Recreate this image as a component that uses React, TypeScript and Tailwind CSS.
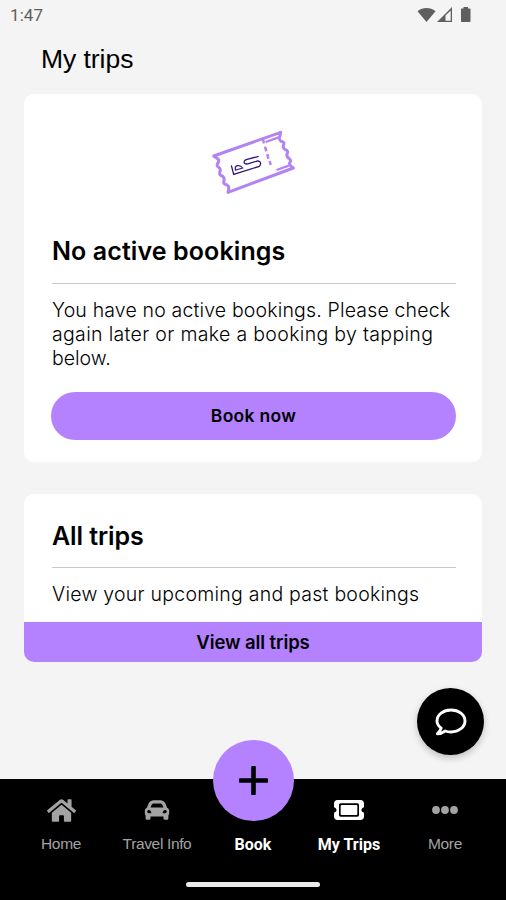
import React from "react";
import { FaHome, FaCarAlt } from "react-icons/fa";
import { FaTicket } from "react-icons/fa6";

type NavItemProps = {
  label: string;
  active?: boolean;
  children?: React.ReactNode;
};

const StatusBar: React.FC = () => {
  return (
    <div className="flex h-[30px] items-center justify-between pl-[10px] pr-[33px] text-[#5f5f5f]">
      <span className="font-[Roboto] text-[17px] leading-[30px] tracking-[0.1px]">
        1:47
      </span>
      <svg width="56" height="18" viewBox="0 0 56 18" fill="currentColor">
        <path d="M0.5 5.2C5.8 0.8 13.2 0.8 18.5 5.2L9.5 16z" />
        {/* Signal, half filled */}
        <path
          fillRule="evenodd"
          d="M35 1V16H20zM33.7 4.4L28.5 9.6V14.7H33.7z"
        />
        <path d="M44.5 2.5H46.5V1h4.5v1.5h1.8q.7 0 .7.8V15.2q0 .8-.8.8h-7.9q-.8 0-.8-.8V3.3q0-.8.5-.8z" />
      </svg>
    </div>
  );
};

const TicketArt: React.FC = () => {
  return (
    <svg width="110" height="85" viewBox="0 0 330 255" fill="none">
      <g stroke="#b283f2" strokeWidth="9" strokeLinejoin="round">
        <path d="M53 116L41 108L242 37L240 48Q234 57 243 64Q256 66 250 76Q248 84 256 89Q267 93 261 102Q259 111 268 116Q275 121 268 130Q268 137 280 144L84 217L86 208Q88 199 80 194Q68 192 72 182Q74 173 67 168Q56 165 60 155Q63 147 56 142Q48 137 54 129Q59 121 53 116" />
        <path
          d="M189 58L192 70M195 80L199 94M202 102L205 116M209 123L212 135"
          strokeWidth="7.5"
        />
        <path d="M197 66L236 52M230 150L266 137" strokeWidth="7" />
      </g>
      <path
        d="M94 136L101 163L178 139Q186 130 178 124Q174 122 168 124L141 132Q130 132 133 123Q135 120 141 118L176 109M107 152Q103 139 112 137Q122 135 128 144L108 150"
        stroke="#30147c"
        strokeWidth="3.8"
      />
    </svg>
  );
};

const NavItem: React.FC<NavItemProps> = ({ label, active, children }) => {
  return (
    <div
      className={
        active
          ? "flex w-24 flex-col items-center font-[Roboto] font-bold text-white"
          : "flex w-24 flex-col items-center text-[#a3a3a3]"
      }
    >
      <div className="flex h-[62px] items-center justify-center">{children}</div>
      <span
        className={
          active
            ? "whitespace-nowrap text-[16px] leading-[8px]"
            : "whitespace-nowrap text-[15.5px] leading-[6px] tracking-[-0.35px]"
        }
      >
        {label}
      </span>
    </div>
  );
};

const App: React.FC = () => {
  return (
    <div className="relative flex h-[900px] w-[506px] flex-col overflow-hidden bg-[#f4f4f4] font-['Liberation_Sans',sans-serif] text-black">
      <StatusBar />
      <h1 className="ml-[41px] mt-[13px] text-[26.5px] leading-8 tracking-[-0.05px]">
        My trips
      </h1>

      <main className="flex flex-1 flex-col gap-8 px-6 pt-[19px]">
        <section className="h-[368px] rounded-[10px] bg-white pl-7 pr-[26px] pt-[26px]">
          <div className="ml-[148px] h-[85px]">
            <TicketArt />
          </div>
          <h2 className="mt-[30px] font-[Inter] text-[25px] font-semibold leading-8 tracking-[0.1px]">
            No active bookings
          </h2>
          <hr className="mt-4 border-[#c8c8c8]" />
          <p className="mt-[14px] whitespace-nowrap font-[Inter] text-[19.5px] font-light leading-6">
            <span className="tracking-[0.16px]">
              You have no active bookings. Please check
            </span>
            <br />
            <span className="tracking-[0.33px]">
              again later or make a booking by tapping
            </span>
            <br />
            below.
          </p>
          <button className="-ml-px mt-[22px] block h-12 w-[405px] rounded-full bg-[#b482ff] pt-px font-[Inter] text-[17.5px] font-semibold tracking-[0.3px]">
            Book now
          </button>
        </section>

        <section className="flex h-[168px] flex-col overflow-hidden rounded-[10px] bg-white">
          <div className="h-32 pl-7 pr-[26px] pt-[26px]">
            <h2 className="font-[Inter] text-[25px] font-semibold leading-8 tracking-[-0.1px]">
              All trips
            </h2>
            <hr className="mt-[15px] border-[#c8c8c8]" />
            <p className="mt-[14px] whitespace-nowrap font-[Inter] text-[19.5px] font-light leading-6 tracking-[0.25px]">
              View your upcoming and past bookings
            </p>
          </div>
          <button className="flex-1 bg-[#b482ff] pt-px font-[Inter] text-[18.5px] font-semibold tracking-[-0.1px]">
            View all trips
          </button>
        </section>
      </main>

      <button className="absolute left-[417px] top-[688px] flex size-[67px] items-center justify-center rounded-full bg-black text-white shadow-[0_3px_7px_rgba(0,0,0,0.22)]">
        <svg width="32" height="28" viewBox="0 0 32 28" fill="none">
          <path
            d="M6.2 20.2C3.3 17.9 2 15.5 2 12.9C2 6.8 8.2 2 16 2S30 6.8 30 12.9S23.8 24 16 24C13.9 24 12 23.7 10.2 23C7.8 24.7 5.2 25.8 2.3 25.8C4.4 24 5.6 22.2 6.2 20.2z"
            stroke="currentColor"
            strokeWidth="2.9"
            strokeLinejoin="round"
          />
        </svg>
      </button>

      <nav className="h-[121px] bg-black">
        <div className="flex pl-[13px]">
          <NavItem label="Home">
            <FaHome size={29} />
          </NavItem>
          <NavItem label="Travel Info">
            <FaCarAlt size={26} />
          </NavItem>
          <NavItem label="Book" active>
            <div className="-mt-[60px] flex size-[81px] shrink-0 items-center justify-center rounded-full bg-[#b482ff]">
              <svg width="29" height="29" viewBox="0 0 29 29" fill="#000">
                <rect x="12.2" width="4.6" height="29" rx="0.8" />
                <rect y="12.2" width="29" height="4.6" rx="0.8" />
              </svg>
            </div>
          </NavItem>
          <NavItem label="My Trips" active>
            <FaTicket size={30} />
          </NavItem>
          <NavItem label="More">
            <svg width="26" height="8" viewBox="0 0 26 8" fill="currentColor">
              <circle cx="4" cy="4" r="3.9" />
              <circle cx="13" cy="4" r="3.9" />
              <circle cx="22" cy="4" r="3.9" />
            </svg>
          </NavItem>
        </div>
        <div className="mx-auto mt-[33px] h-[5px] w-[134px] rounded-full bg-[#eceaec]" />
      </nav>
    </div>
  );
};

export default App;
